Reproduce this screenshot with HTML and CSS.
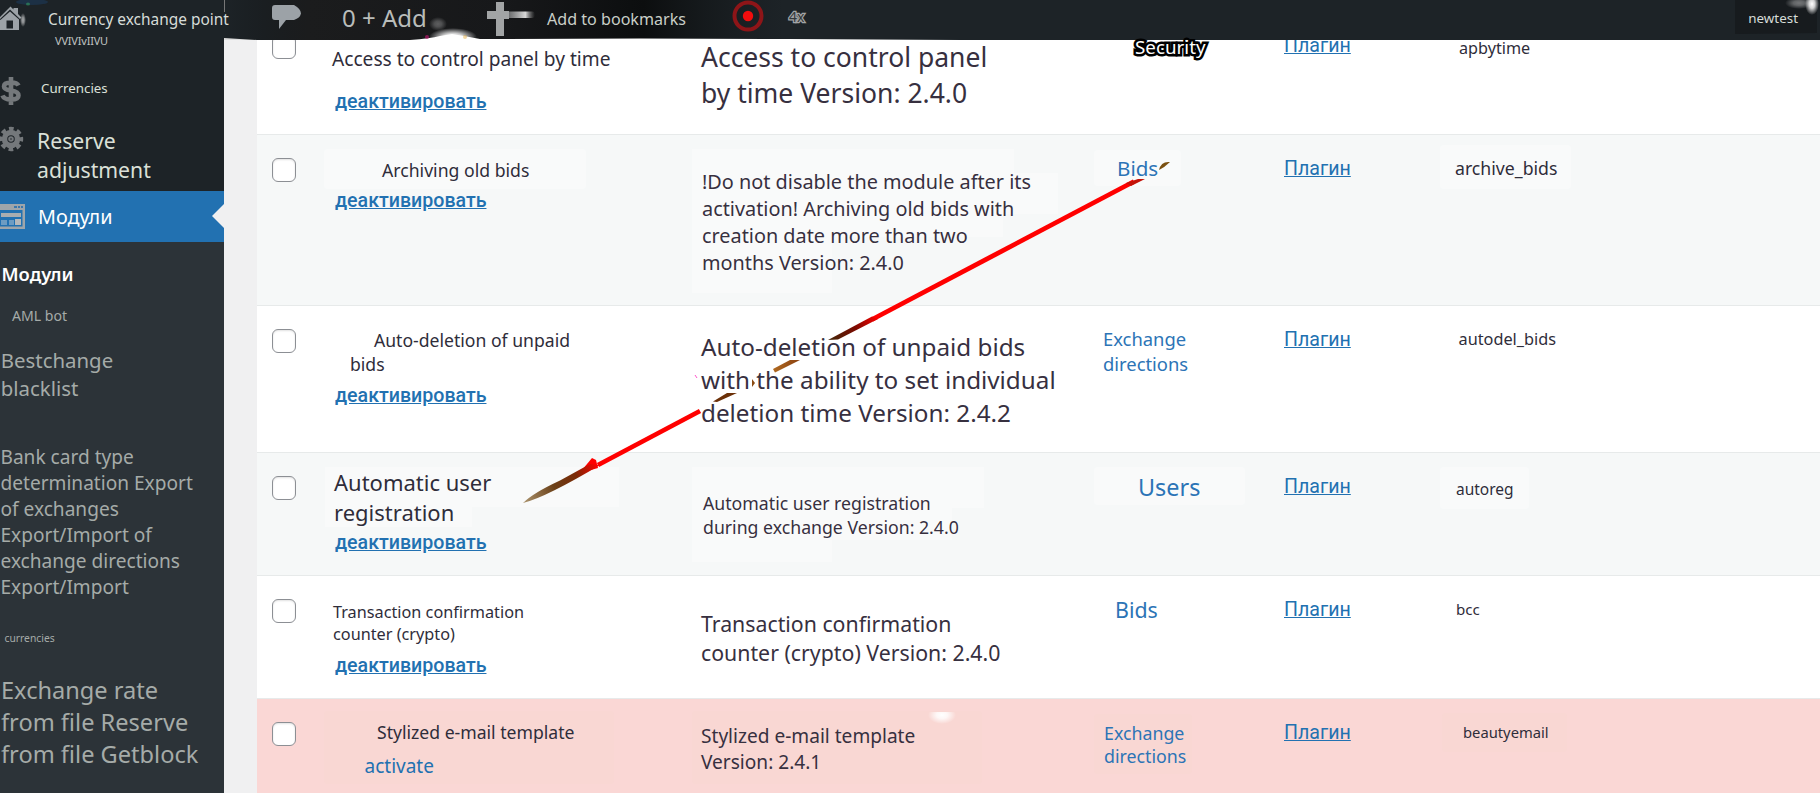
FILE: index.html
```html
<!DOCTYPE html>
<html lang="ru">
<head>
<meta charset="utf-8">
<title>Модули</title>
<link rel="stylesheet" href="styles.css">
</head>
<body>
<header class="bar">
  <svg class="bar-glow" width="1820" height="46" viewBox="0 0 1820 46">
    <defs>
      <radialGradient id="white"><stop offset="0" stop-color="#fff"/><stop offset=".4" stop-color="#fff" stop-opacity=".8"/><stop offset="1" stop-color="#fff" stop-opacity="0"/></radialGradient>
      <linearGradient id="tail"><stop offset="0" stop-color="#a2a4a5" stop-opacity=".4"/><stop offset=".7" stop-color="#d8d8d8"/><stop offset="1" stop-color="#888" stop-opacity="0"/></linearGradient>
      <linearGradient id="shade"><stop offset="0" stop-color="#131618" stop-opacity="0"/><stop offset=".15" stop-color="#1b1c1d"/><stop offset=".5" stop-color="#17181a"/><stop offset=".75" stop-color="#0c0e0f"/><stop offset="1" stop-color="#14181a" stop-opacity="0"/></linearGradient>
    </defs>
    <rect x="224" y="0" width="560" height="40" fill="url(#shade)"/>
    <path d="M224 38L257 40L224 40Z" fill="#ddd"/>
    <path d="M410 40Q430 38.500 440 36L452 34L464 36L480 39L640 38.500L790 39L960 40Z" fill="#fff"/>
    <ellipse cx="453" cy="37" rx="24" ry="9" fill="url(#white)"/>
    <ellipse cx="438" cy="24" rx="9" ry="7" fill="url(#white)" opacity=".3"/>
    <ellipse cx="427" cy="37" rx="2" ry="2" fill="#b0186a" opacity=".7"/>
    <ellipse cx="465" cy="37" rx="2" ry="2" fill="#e8b24a" opacity=".5"/>
    <ellipse cx="23" cy="20" rx="3" ry="7" fill="url(#white)" opacity=".6"/>
    <ellipse cx="32" cy="2" rx="16" ry="3" fill="#1c3d63" opacity=".5"/>
    <ellipse cx="28" cy="4" rx="2" ry="1.500" fill="#35b06a" opacity=".5"/>
    <rect x="224" y="0" width="1" height="12" fill="#777"/>
    <path d="M1735 0H1817V33L1735 34Z" fill="#171b1e"/>
    <ellipse cx="1799" cy="3" rx="14" ry="6" fill="url(#white)" opacity=".4"/>
    <ellipse cx="1812" cy="4" rx="7" ry="11" fill="url(#white)"/>
  </svg>
  <svg class="home" width="22" height="28" viewBox="0 0 22 28" fill="#9ca2a7"><path d="M0 14L10.500 3.500L13.500 6.500V5H18V11L21.500 14.500L20 16L10 6.500L0 16Z"/><path fill-rule="evenodd" d="M1 16.500L10 8.500L19 16.500V27H0V17ZM6.500 17.500V25.500H13V17.500Z"/></svg>
  <span class="site">Currency exchange point</span>
  <svg class="comment" width="30" height="26" viewBox="0 0 30 26"><path d="M3 0H22Q29 4 29 8.500Q28 13 22 15H14L7 24V15H3Q0 15 0 12V3Q0 0 3 0Z" fill="#9ca2a7"/></svg>
  <span class="add">0 + Add</span>
  <svg class="plus" width="48" height="36" viewBox="0 0 48 36"><rect x="16" y="9.500" width="32" height="6.500" rx="3" fill="url(#tail)"/><path d="M9 0H17V9H22V17H17V34H9V17H0V9H9Z" fill="#a2a4a5"/></svg>
  <span class="bookmarks">Add to bookmarks</span>
  <svg class="record" width="32" height="32" viewBox="0 0 32 32"><circle cx="16" cy="16" r="13.500" fill="none" stroke="#8e1518" stroke-width="4"/><circle cx="16" cy="16" r="5.200" fill="#f20d0d"/></svg>
  <span class="speed">4x</span>
  <span class="user">newtest</span>
</header>
<div class="body">
  <nav class="side">
    <div class="clip">VVIVIvIIVU</div>
    <div class="item currencies">
      <svg width="22" height="28" viewBox="0 0 22 28" fill="none" stroke="#74787b" stroke-width="4.600"><path d="M18.500 8.500Q17 5.500 11 5.500Q4 5.500 4 9.500Q4 12.500 11 13.500Q18.500 14.500 18.500 18.500Q18.500 22.500 11 22.500Q4 22.500 2.500 18.500M11 0V28"/></svg>
      <span>Currencies</span>
    </div>
    <div class="item reserve">
      <svg width="24" height="26" viewBox="-11 -13 24 26" fill="none" stroke="#74787b"><circle r="6.500" stroke-width="5.500"/><circle r="1.800" stroke-width="2"/><circle r="10.200" stroke-width="4" stroke-dasharray="4.600 3.411" stroke-dashoffset="2.300"/></svg>
      <span>Reserve<br>adjustment</span>
    </div>
    <div class="item active">
      <svg width="25" height="25" viewBox="0 0 25 25"><path d="M0 0H25V25H0V22.500H22.500V6H0Z" fill="#9ea5aa"/><path d="M1 9H21V13H1Z" fill="#a9adb0"/><path d="M1 16H7V21H1ZM9 16H14V21H9Z" fill="#6d9cc2"/><path d="M15 15H21V21H15Z" fill="#b5b8ba"/><path d="M14 2H17V4H14ZM18 2H20V4H18ZM21 2H23V4H21Z" fill="#3a77ad"/></svg>
      <span>Модули</span>
      <i class="notch"></i>
    </div>
    <div class="sub">
      <div class="s1">Модули</div>
      <div class="s2">AML bot</div>
      <div class="s3">Bestchange<br>blacklist</div>
      <div class="s4">Bank card type<br>determination Export<br>of exchanges<br>Export/Import of<br>exchange directions<br>Export/Import</div>
      <div class="s5">currencies</div>
      <div class="s6">Exchange rate<br>from file Reserve<br>from file Getblock</div>
    </div>
  </nav>
  <main class="table">
    <div class="row r1">
      <i class="check"></i>
      <div class="name"><p>Access to control panel by time</p><a class="off">деактивировать</a></div>
      <div class="desc">Access to control panel<br>by time Version: 2.4.0</div>
      <div class="cat">Security</div>
      <div class="type"><a>Плагин</a></div>
      <div class="slug">apbytime</div>
    </div>
    <div class="row alt r2">
      <i class="check"></i>
      <div class="name"><p>Archiving old bids</p><a class="off">деактивировать</a></div>
      <div class="desc">!Do not disable the module after its<br>activation! Archiving old bids with<br>creation date more than two<br>months Version: 2.4.0</div>
      <div class="cat">Bids</div>
      <div class="type"><a>Плагин</a></div>
      <div class="slug">archive_bids</div>
    </div>
    <div class="row r3">
      <i class="check"></i>
      <div class="name"><p>Auto-deletion of unpaid<br>bids</p><a class="off">деактивировать</a></div>
      <div class="desc">Auto-deletion of unpaid bids<br>with the ability to set individual<br>deletion time Version: 2.4.2</div>
      <div class="cat">Exchange<br>directions</div>
      <div class="type"><a>Плагин</a></div>
      <div class="slug">autodel_bids</div>
    </div>
    <div class="row alt r4">
      <i class="check"></i>
      <div class="name"><p>Automatic user<br>registration</p><a class="off">деактивировать</a></div>
      <div class="desc">Automatic user registration<br>during exchange Version: 2.4.0</div>
      <div class="cat">Users</div>
      <div class="type"><a>Плагин</a></div>
      <div class="slug">autoreg</div>
    </div>
    <div class="row r5">
      <i class="check"></i>
      <div class="name"><p>Transaction confirmation<br>counter (crypto)</p><a class="off">деактивировать</a></div>
      <div class="desc">Transaction confirmation<br>counter (crypto) Version: 2.4.0</div>
      <div class="cat">Bids</div>
      <div class="type"><a>Плагин</a></div>
      <div class="slug">bcc</div>
    </div>
    <div class="row inactive r6">
      <i class="check"></i>
      <div class="name"><p>Stylized e-mail template</p><a class="on">activate</a></div>
      <div class="desc">Stylized e-mail template<br>Version: 2.4.1</div>
      <div class="cat">Exchange<br>directions</div>
      <div class="type"><a>Плагин</a></div>
      <div class="slug">beautyemail</div>
    </div>
    <svg class="marks" width="1820" height="793" viewBox="0 0 1820 793">
      <defs>
        <linearGradient id="tip" gradientUnits="userSpaceOnUse" x1="525" y1="502" x2="598" y2="465"><stop offset="0" stop-color="#a8906a"/><stop offset=".4" stop-color="#6b4018"/><stop offset=".7" stop-color="#7a2a06"/><stop offset="1" stop-color="#f00"/></linearGradient>
        <linearGradient id="mid" gradientUnits="userSpaceOnUse" x1="832" y1="339" x2="878" y2="316"><stop offset="0" stop-color="#4a2408"/><stop offset=".5" stop-color="#7a0a00"/><stop offset="1" stop-color="#f00"/></linearGradient>
        <linearGradient id="seg"><stop offset="0" stop-color="#b06a20"/><stop offset="1" stop-color="#8a4010"/></linearGradient>
      </defs>
      <g fill="#f9fafa">
        <rect x="324" y="149" width="262" height="40" rx="4"/>
        <path d="M692 149H1014V173H1058V214H1003V237H832V293H692Z"/>
        <rect x="1094" y="150" width="87" height="36" rx="4"/>
        <rect x="1440" y="145" width="131" height="44" rx="4"/>
        <path d="M325 467H619V507H472V527H325Z"/>
        <path d="M692 467H984V508H952V540H832V562H692Z"/>
        <rect x="1094" y="467" width="151" height="38" rx="4"/>
        <rect x="1440" y="467" width="89" height="42" rx="4"/>
      </g>
      <g fill="#f9d7d3"><rect x="324" y="711" width="290" height="73" rx="4"/><rect x="692" y="711" width="290" height="73" rx="4"/><rect x="1094" y="714" width="98" height="60" rx="4"/><rect x="1442" y="713" width="125" height="39" rx="4"/></g>
      <clipPath id="cut"><rect x="915" y="712" width="60" height="30"/></clipPath>
      <ellipse cx="942" cy="715" rx="14" ry="9" fill="url(#white)" clip-path="url(#cut)"/>
      <path d="M872 319.500L1134 181.500" stroke="#f00" stroke-width="4.800"/>
      <path d="M1126 183L1138 179L1145 179L1131 186Z" fill="#c31208"/>
      <path d="M828 340L872 316.500L878 319L838 339.500Z" fill="url(#mid)"/>
      <path d="M773 369L790 360L800 360L775 372.500Z" fill="url(#seg)"/>
      <path d="M752 379L755 383L752 387Z" fill="#8a4a10"/>
      <path d="M713 401.500L727 393L737 393L717 402Z" fill="#6b3008"/>
      <path d="M598 465L700 411" stroke="#f00" stroke-width="4.800"/>
      <path d="M592 458L596 460L598 468L584 472L582 470Z" fill="#f00"/>
      <path d="M523 503Q533 493 560 480.500L590 464L600 465Q575 480 555 490Q535 500 523 503Z" fill="url(#tip)"/>
      <path d="M1159 170Q1161 161 1170 162Q1165 167 1159 170Z" fill="#7a5010"/>
      <path d="M695 375L697 378" stroke="#f5c" stroke-width="1"/>
    </svg>
  </main>
</div>
</body>
</html>
```
FILE: styles.css
```css
* { box-sizing: border-box; }
body { margin: 0; width: 1820px; height: 793px; overflow: hidden; display: flex; flex-direction: column; background: #f0f0f1; font-family: "Noto Sans", sans-serif; white-space: nowrap; }
p { margin: 0; }
svg { flex: none; }

/* top bar */
.bar { position: relative; z-index: 2; height: 40px; flex: none; display: flex; align-items: center; background: #1d2327; color: #d6dcd8; }
.bar > * { position: relative; }
.bar > .bar-glow { position: absolute; left: 0; top: 0; }
.home { margin-top: -7px; }
.site { font-size: 15.45px; margin-left: 26px; width: 224px; padding-bottom: 2px; }
.comment { margin-top: -5px; }
.add { font-size: 24px; color: #b9bdba; margin-left: 40px; width: 145px; padding-bottom: 5px; }
.plus { margin-top: -1px; }
.bookmarks { font-size: 16.1px; color: #c9cfc8; margin-left: 12px; width: 185px; padding-bottom: 3px; }
.record { margin-top: -8px; }
.speed { font-size: 14px; margin-left: 25px; padding-bottom: 7px; color: #33383b; -webkit-text-stroke: 2.5px #a2a4a5; paint-order: stroke fill; }
.user { font-size: 13.4px; margin-left: auto; margin-right: 22px; padding-bottom: 4px; }

.body { flex: 1; min-height: 0; display: flex; gap: 33px; }

/* sidebar */
.side { width: 224px; flex: none; background: #1d2327; color: #dbe0d8; display: flex; flex-direction: column; }
.clip { position: relative; z-index: 3; font-size: 11px; line-height: 16px; margin-top: -7.500px; padding-left: 55px; letter-spacing: -0.2px; color: #c0c4c2; }
.item { display: flex; align-items: flex-start; flex: none; }
.currencies { margin-top: 29.300px; height: 20px; font-size: 13.3px; line-height: 20px; gap: 19px; }
.currencies svg { margin-top: -1px; }
.reserve { margin-top: 28px; font-size: 21.2px; line-height: 29px; gap: 13px; height: 58px; }
.active { margin-top: 7.200px; height: 51px; align-items: center; background: #2271b1; color: #fff; font-size: 19.8px; gap: 13px; }
.active span { padding-top: 1px; }
.notch { margin-left: auto; border: 12px solid transparent; border-left: 0; border-right-color: #f0f0f1; }
.sub { flex: 1; background: #2c3338; color: #a5aba8; padding-top: 19px; }
.s1 { font-size: 18.4px; line-height: 26px; font-weight: 600; color: #fff; padding-left: 1.500px; }
.s2 { font-size: 14.1px; line-height: 20px; margin-top: 19.200px; padding-left: 12px; }
.s3 { font-size: 20.4px; line-height: 27.800px; margin-top: 21px; padding-left: .800px; }
.s4 { font-size: 19.1px; line-height: 26px; margin-top: 41.500px; padding-left: .500px; }
.s5 { font-size: 10.3px; line-height: 14px; margin-top: 30.500px; padding-left: 4.500px; }
.s6 { font-size: 23.6px; line-height: 32px; margin-top: 29.500px; padding-left: 1px; }

/* modules table */
.table { flex: 1; min-width: 0; }
.row { display: grid; grid-template-columns: 68px 376px 400px 183px 171px 1fr; align-items: start; background: #fff; border-bottom: 1px solid #e7eaea; color: #2f2d3a; }
.row > * { position: relative; z-index: 1; }
.alt { background: #f6f8f8; }
.inactive { background: #fad7d5; border: 0; }
.check { width: 24px; height: 24px; margin: 23px 0 0 15px; border: 1px solid #8c8f94; border-radius: 6px; background: #fff; box-shadow: inset 0 1px 2px rgba(0,0,0,.12); }
.off, .type a { font-family: Roboto, sans-serif; color: #2271b1; text-decoration: underline; font-size: 19.6px; line-height: 24px; }
.off { display: block; margin-left: 10px; font-weight: 500; }
.on { display: block; color: #2271b1; font-size: 19px; line-height: 24px; margin: 10.300px 0 0 39.500px; }
.type { line-height: 24px; padding-top: 22.300px; font-size: 19.5px; display: flex; }
.slug { line-height: 22px; }
.cat { color: #2c74b6; }
.desc { color: #37303f; }
.alt .cat, .alt .slug, .alt .desc, .alt .name p, .r3 .desc { text-shadow: 0 0 2px #fff; }

.r1 { height: 95px; }
.r1 .check { margin-top: -5px; }
.r1 .name { padding-top: 5.900px; }
.r1 p { font-size: 19.15px; line-height: 26px; margin-left: 7px; }
.r1 .off { margin-top: 18.100px; }
.r1 .desc { z-index: 3; font-size: 26.5px; line-height: 36.300px; margin-top: -1.100px; }
.r1 .cat { z-index: 3; font-size: 18.8px; line-height: 24px; margin: -5px 0 0 34px; color: #fff; -webkit-text-stroke: 5px #000; paint-order: stroke fill; }
.r1 .type { padding-top: 0; margin-top: -5.700px; }
.r1 .slug { z-index: 3; font-size: 16.2px; margin: -3.400px 0 0 4px; text-shadow: 0 0 2px #fff; }

.r2 { height: 171px; }
.r2 .name { padding-top: 23.200px; }
.r2 p { font-size: 17.65px; line-height: 24px; margin-left: 57px; }
.r2 .off { margin-top: 7.100px; }
.r2 .desc { font-size: 19.85px; line-height: 27px; margin: 32.500px 0 0 1px; }
.r2 .cat { font-size: 20.6px; line-height: 24px; margin: 21.300px 0 0 16px; }
.r2 .slug { font-size: 17.7px; margin-top: 21.800px; }

.r3 { height: 147px; }
.r3 .name { padding-top: 22.800px; }
.r3 p { font-size: 17.6px; line-height: 23.900px; margin-left: 25px; text-indent: 24px; }
.r3 .off { margin-top: 7px; }
.r3 .desc { font-size: 24.25px; line-height: 33.200px; margin-top: 24px; }
.r3 .cat { font-size: 18.4px; line-height: 24.800px; margin: 21px 0 0 2px; }
.r3 .slug { font-size: 16.3px; margin: 22.400px 0 0 3.500px; }

.r4 { height: 123px; }
.r4 .name { padding-top: 13.700px; }
.r4 p { font-size: 22px; line-height: 30px; margin-left: 9px; }
.r4 .off { margin-top: 3.900px; }
.r4 .desc { font-size: 17.7px; line-height: 24px; margin: 38.200px 0 0 2px; }
.r4 .cat { font-size: 23.4px; line-height: 30px; margin: 19px 0 0 37px; }
.r4 .slug { font-size: 15.5px; margin: 24.800px 0 0 1px; }

.r5 { height: 123px; }
.r5 .name { padding-top: 24.700px; }
.r5 p { font-size: 16.25px; line-height: 22px; margin-left: 8px; }
.r5 .off { margin-top: 9.600px; }
.r5 .desc { font-size: 21.3px; line-height: 29px; margin-top: 33.300px; }
.r5 .cat { font-size: 21.4px; line-height: 28px; margin: 19.800px 0 0 14px; }
.r5 .slug { font-size: 15.1px; margin: 21.500px 0 0 1px; }

.r6 { height: 94px; }
.r6 .name { padding-top: 20.900px; }
.r6 p { font-size: 17.6px; line-height: 24px; margin-left: 52px; }
.r6 .desc { font-size: 19.1px; line-height: 26.200px; margin-top: 24px; }
.r6 .cat { font-size: 17.8px; line-height: 23.600px; margin: 22.600px 0 0 3px; }
.r6 .slug { font-size: 14.75px; margin: 21.600px 0 0 8px; }

/* arrow annotation drawn over the table, under its text */
.marks { position: absolute; left: 0; top: 0; z-index: 0; pointer-events: none; }
```
